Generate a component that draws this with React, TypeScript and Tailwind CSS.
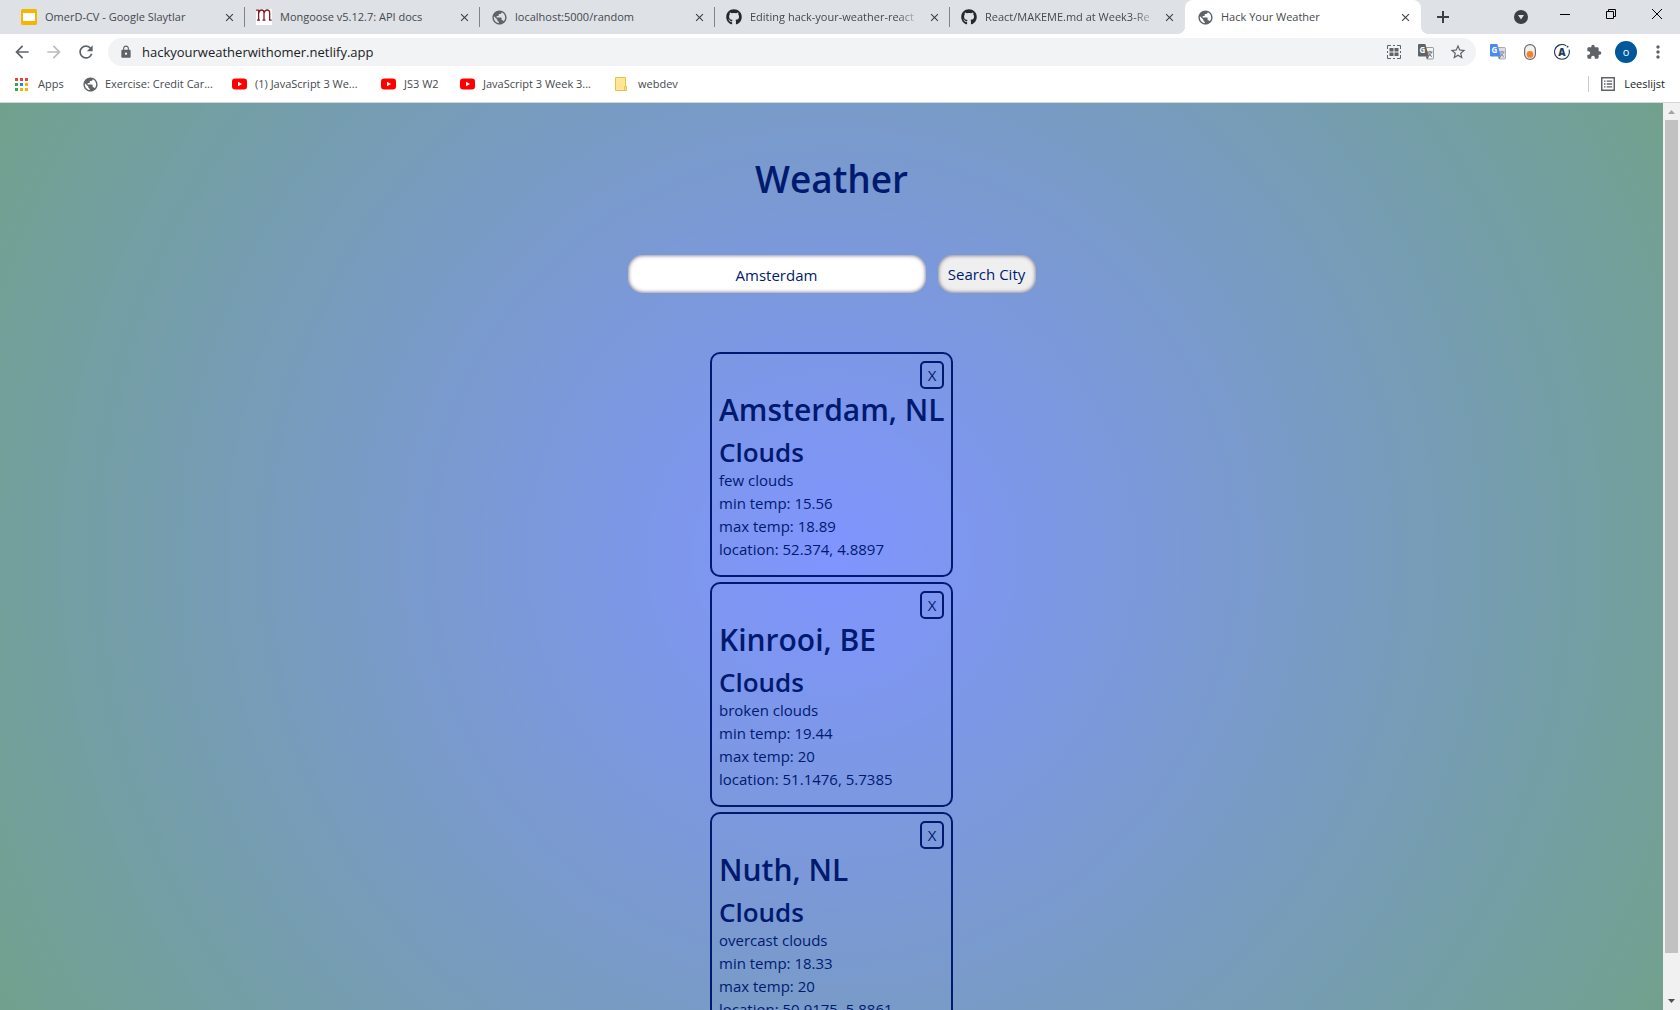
import React from "react";
import {
  MdArrowBack,
  MdArrowForward,
  MdClose,
  MdExtension,
  MdLock,
  MdMoreVert,
  MdPublic,
  MdRefresh,
  MdStarBorder,
} from "react-icons/md";
import { FaGithub } from "react-icons/fa";

function SlidesIcon() {
  return (
    <svg viewBox="0 0 16 16" className="size-4" aria-hidden="true">
      <rect width="16" height="16" rx="1.5" fill="#f7b500" />
      <rect x="2" y="4" width="12" height="8" fill="#fff" />
    </svg>
  );
}

function MongooseIcon() {
  return (
    <svg viewBox="0 0 16 16" className="size-4 bg-white" aria-hidden="true">
      <path
        d="M0 1.2h2.6v10M2.6 4.5C3 2 4.4 1 5.6 1 7.5 1 8 2.4 8 4v7.2M8 4.5C8.4 2 9.8 1 11.2 1c1.9 0 2.5 1.4 2.5 3v7.2h2M1 11.2h3M6.5 11.2h3"
        fill="none"
        stroke="#8a1a1e"
        strokeWidth="1.3"
      />
    </svg>
  );
}

function YoutubeIcon() {
  return (
    <svg viewBox="0 0 15 12" className="h-3 w-[15px] shrink-0" aria-hidden="true">
      <rect y="0.5" width="15" height="11" rx="3" fill="#f00" />
      <path d="M6 3.7v4.6L10 6z" fill="#fff" />
    </svg>
  );
}

function AppsIcon() {
  const colors = ["#ea4335", "#ea4335", "#ea4335", "#34a853", "#1a88f0", "#f5b400", "#34a853", "#f5b400", "#f5b400"];
  return (
    <svg viewBox="0 0 13 13" className="size-[13px] shrink-0" aria-hidden="true">
      {colors.map((c, i) => (
        <rect key={i} x={(i % 3) * 5} y={Math.floor(i / 3) * 5} width="3" height="3" fill={c} />
      ))}
    </svg>
  );
}

function FolderIcon() {
  return (
    <svg viewBox="0 0 12 14" className="h-[14px] w-3 shrink-0" aria-hidden="true">
      <path d="M.5.5h10v9h1v4H.5z" fill="#ffe694" stroke="#e8c24a" />
      <path d="M9.5 13V9.5h1" fill="none" stroke="#e8c24a" />
    </svg>
  );
}

function QrIcon() {
  return (
    <svg viewBox="0 0 14 14" className="size-[14px]" aria-hidden="true">
      <path
        d="M.5 4V.5H4M10 .5h3.5V4M13.5 10v3.5H10M4 13.500H.5V10M6 .5h2M6 13.5h2M.5 6v2M13.5 6v2"
        fill="none"
        stroke="#5f6368"
      />
      <path d="M2.500 3h4v3.5h-4zM7.5 3h4v3.5h-4zM2.5 7.5h4V11h-4zM7.5 7.5h4V11h-4z" fill="#5f6368" />
    </svg>
  );
}

function TranslateIcon({ front, back, ink }: { front: string; back: string; ink: string }) {
  return (
    <svg viewBox="0 0 16 16" className="size-4" aria-hidden="true">
      <path d="M6 3.5h8.5a1 1 0 0 1 1 1V14a1 1 0 0 1-1 1H9.500z" fill={back} stroke={ink} strokeWidth="0.6" />
      <path
        d="M9.5 8h5M12 6.8V8M13.5 8c-.5 2-1.8 3.5-3.5 4.6M10.6 8.8c.6 1.5 1.8 3 3.4 3.8"
        fill="none"
        stroke={ink}
        strokeWidth="0.9"
      />
      <path d="M1 0h6.300l3.700 12.500H1a1 1 0 0 1-1-1V1a1 1 0 0 1 1-1z" fill={front} />
      <text x="1.600" y="9" fontSize="8" fontWeight="700" fill="#fff">
        G
      </text>
      <path d="M8 12.5h3L9 15.500z" fill={ink} />
    </svg>
  );
}

function CapsuleIcon() {
  return (
    <svg viewBox="0 0 12 16" className="h-4 w-3" aria-hidden="true">
      <rect x="0.6" y="0.6" width="10.8" height="14.8" rx="5.2" fill="#f1f1f1" stroke="#6b6b6b" strokeWidth="1.2" />
      <circle cx="6" cy="10.400" r="3.4" fill="#f5812a" />
    </svg>
  );
}

function ApolloIcon() {
  return (
    <svg viewBox="0 0 16 16" className="size-4" aria-hidden="true">
      <path d="M12.300 1.900A7.4 7.4 0 1 0 15 5.600" fill="none" stroke="#1f3a5f" strokeWidth="1.1" />
      <circle cx="13.600" cy="2.700" r="0.9" fill="#1f3a5f" />
      <text x="8" y="11.600" textAnchor="middle" fontSize="10" fontWeight="800" fill="#1f3a5f">
        A
      </text>
    </svg>
  );
}

function ReadingListIcon() {
  return (
    <svg viewBox="0 0 14 14" className="size-[14px] shrink-0" aria-hidden="true">
      <rect x="0.75" y="0.75" width="12.5" height="12.5" fill="#fff" stroke="#5f6368" strokeWidth="1.5" />
      <path
        d="M3 4.2h1.5M3 7h1.5M3 9.8h1.5M5.7 4.2h5.5M5.7 7h5.5M5.7 9.8h5.5"
        stroke="#5f6368"
        strokeWidth="1.3"
      />
    </svg>
  );
}

const globe = <MdPublic className="size-[17px] text-[#5f6368]" />;
const github = <FaGithub className="size-4 text-[#24292e]" />;

const tabs = [
  { icon: <SlidesIcon />, title: "OmerD-CV - Google Slaytlar" },
  { icon: <MongooseIcon />, title: "Mongoose v5.12.7: API docs" },
  { icon: globe, title: "localhost:5000/random" },
  { icon: github, title: "Editing hack-your-weather-react", fade: true },
  { icon: github, title: "React/MAKEME.md at Week3-Re", fade: true, last: true },
  { icon: globe, title: "Hack Your Weather", active: true },
];

function TabStrip() {
  return (
    <div className="flex h-[34px] bg-[#dee1e6] pl-[10px]">
      {tabs.map((t) => (
        <div
          key={t.title}
          className={
            t.active
              ? "relative flex w-[236px] items-center rounded-t-lg bg-white pr-[9px] pl-3"
              : "relative flex w-[235px] items-center pr-[9px] pl-[11px]"
          }
        >
          <span className="flex w-6 shrink-0">{t.icon}</span>
          <span className="flex-1 text-[11px] whitespace-nowrap text-[#45494d]">
            <span
              className={
                t.fade ? "[mask-image:linear-gradient(to_right,black_90%,rgba(0,0,0,0.3))]" : undefined
              }
            >
              {t.title}
            </span>
          </span>
          <button type="button" aria-label={"Close " + t.title} className="ml-1 shrink-0 text-[#3c4043]">
            <MdClose className="size-[13px]" />
          </button>
          {!t.active && !t.last && <span className="absolute top-[7px] right-0 h-5 w-px bg-[#808387]" />}
          {t.active && (
            <>
              <span className="absolute bottom-0 -left-2 size-2 bg-[radial-gradient(circle_at_0_0,#dee1e6_8px,white_8px)]" />
              <span className="absolute -right-2 bottom-0 size-2 bg-[radial-gradient(circle_at_100%_0,#dee1e6_8px,white_8px)]" />
            </>
          )}
        </div>
      ))}
      <button type="button" aria-label="New tab" className="ml-[15px] flex items-center">
        <svg viewBox="0 0 14 14" className="size-[14px]">
          <path d="M7 1v12M1 7h12" stroke="#3c4043" strokeWidth="2" />
        </svg>
      </button>
      <div className="ml-auto flex">
        <button type="button" aria-label="Search tabs" className="flex w-[42px] items-center justify-center">
          <svg viewBox="0 0 14 14" className="size-[14px]">
            <circle cx="7" cy="7" r="7" fill="#3c4043" />
            <path d="M4 5h6L7 9.5z" fill="#dee1e6" />
          </svg>
        </button>
        <button type="button" aria-label="Minimize" className="flex h-7 w-[46px] items-center justify-center">
          <svg viewBox="0 0 10 10" className="size-[10px]">
            <path d="M0 5.5h10" stroke="#000" />
          </svg>
        </button>
        <button type="button" aria-label="Restore" className="flex h-7 w-[46px] items-center justify-center">
          <svg viewBox="0 0 10 10" className="size-[10px]">
            <path d="M.5 2.5h7v7h-7zM2.5 2.5v-2h7v7h-2" fill="none" stroke="#000" />
          </svg>
        </button>
        <button type="button" aria-label="Close window" className="flex h-7 w-[46px] items-center justify-center">
          <svg viewBox="0 0 10 10" className="size-[10px]">
            <path d="M0 0l10 10M10 0L0 10" stroke="#000" />
          </svg>
        </button>
      </div>
    </div>
  );
}

function Toolbar() {
  return (
    <div className="flex h-8 items-center pt-1 pr-[6px] pl-[6px]">
      <button type="button" aria-label="Back" className="flex w-8 justify-center text-[#5f6368]">
        <MdArrowBack className="size-5" />
      </button>
      <button type="button" aria-label="Forward" className="flex w-8 justify-center text-[#babcbe]">
        <MdArrowForward className="size-5" />
      </button>
      <button type="button" aria-label="Reload" className="flex w-8 justify-center text-[#5f6368]">
        <MdRefresh className="size-5" />
      </button>
      <div className="ml-[6px] flex h-7 flex-1 items-center rounded-full bg-[#f1f3f4] pr-[2px] pl-[11px]">
        <MdLock className="size-[14px] text-[#5f6368]" />
        <input
          aria-label="Address"
          defaultValue="hackyourweatherwithomer.netlify.app"
          className="ml-[9px] flex-1 bg-transparent pt-px text-[13px] text-[#202124] outline-none"
        />
        <button type="button" aria-label="QR code" className="flex w-8 justify-center">
          <QrIcon />
        </button>
        <button type="button" aria-label="Translate page" className="flex w-8 justify-center">
          <TranslateIcon front="#5f6368" back="#f1f3f4" ink="#5f6368" />
        </button>
        <button type="button" aria-label="Bookmark" className="flex w-8 justify-center text-[#5f6368]">
          <MdStarBorder className="size-[18px]" />
        </button>
      </div>
      <button type="button" aria-label="Google Translate" className="ml-[6px] flex w-8 justify-center">
        <TranslateIcon front="#4a8af4" back="#dedede" ink="#7a8797" />
      </button>
      <button type="button" aria-label="Capsule" className="flex w-8 justify-center">
        <CapsuleIcon />
      </button>
      <button type="button" aria-label="Apollo" className="flex w-8 justify-center">
        <ApolloIcon />
      </button>
      <button type="button" aria-label="Extensions" className="flex w-8 justify-center text-[#5f6368]">
        <MdExtension className="size-4" />
      </button>
      <button type="button" aria-label="Profile" className="flex w-8 justify-center">
        <span className="flex size-[22px] items-center justify-center rounded-full bg-[#01579b] text-[11px] text-white">
          o
        </span>
      </button>
      <button type="button" aria-label="Menu" className="flex w-8 justify-center text-[#5f6368]">
        <MdMoreVert className="size-5" />
      </button>
    </div>
  );
}

const bookmarks = [
  { icon: <AppsIcon />, label: "Apps", width: "w-[67px]" },
  {
    icon: <MdPublic className="size-[17px] shrink-0 text-[#5f6368]" />,
    label: "Exercise: Credit Car...",
    width: "w-[150px]",
  },
  { icon: <YoutubeIcon />, label: "(1) JavaScript 3 We...", width: "w-[149px]" },
  { icon: <YoutubeIcon />, label: "JS3 W2", width: "w-[79px]" },
  { icon: <YoutubeIcon />, label: "JavaScript 3 Week 3...", width: "w-[155px]" },
  { icon: <FolderIcon />, label: "webdev", width: "w-20" },
];

function BookmarksBar() {
  return (
    <div className="flex h-[37px] items-center border-b border-[#d3d6da] pr-[15px] pl-[15px] text-[11px] text-[#45494d]">
      {bookmarks.map((b) => (
        <a key={b.label} href="#" className={"flex shrink-0 items-center whitespace-nowrap " + b.width}>
          <span className="flex w-[23px] shrink-0">{b.icon}</span>
          {b.label}
        </a>
      ))}
      <a href="#" className="ml-auto flex items-center text-[#202124]">
        <span className="mr-3 h-4 w-px bg-[#c8cacd]" />
        <ReadingListIcon />
        <span className="ml-[9px]">Leeslijst</span>
      </a>
    </div>
  );
}

const cities = [
  { name: "Amsterdam, NL", main: "Clouds", detail: "few clouds", min: "15.56", max: "18.89", location: "52.374, 4.8897" },
  { name: "Kinrooi, BE", main: "Clouds", detail: "broken clouds", min: "19.44", max: "20", location: "51.1476, 5.7385" },
  { name: "Nuth, NL", main: "Clouds", detail: "overcast clouds", min: "18.33", max: "20", location: "50.9175, 5.8861" },
];

function CityCard({ city }: { city: (typeof cities)[number] }) {
  return (
    <article className="flex w-[243px] flex-col rounded-[10px] border-2 border-[#001a70] px-[7px] pt-[7px] pb-[14px]">
      <button
        type="button"
        aria-label={"Remove " + city.name}
        className="h-7 w-6 self-end rounded-[5px] border-2 border-[#001a70] text-[15px] leading-6"
      >
        X
      </button>
      <h2 className="mt-[2px] mb-[7px] text-[30px] leading-[38px] font-semibold whitespace-nowrap">{city.name}</h2>
      <h3 className="text-[26px] leading-[33px] font-semibold">{city.main}</h3>
      <p>{city.detail}</p>
      <p>min temp: {city.min}</p>
      <p>max temp: {city.max}</p>
      <p>location: {city.location}</p>
    </article>
  );
}

function WeatherPage() {
  return (
    <main className="flex flex-1 flex-col items-center overflow-hidden bg-[radial-gradient(circle,#8095ff,#71a18d)] text-[15px] leading-[23px] text-[#001a70]">
      <h1 className="mt-[52px] text-[37px] leading-[48px] font-semibold">Weather</h1>
      <form className="mt-[52px] flex gap-3" onSubmit={(e) => e.preventDefault()}>
        <input
          aria-label="City"
          defaultValue="Amsterdam"
          className="h-[38px] w-[298px] rounded-[15px] bg-white pt-[2px] text-center shadow-[inset_0_0_4px_#5c5470] outline-none"
        />
        <button type="submit" className="h-[38px] w-[98px] rounded-[15px] bg-[#efefef] shadow-[inset_0_0_4px_#5c5470]">
          Search City
        </button>
      </form>
      <div className="mt-[59px] flex flex-col gap-[5px]">
        {cities.map((c) => (
          <CityCard key={c.name} city={c} />
        ))}
      </div>
    </main>
  );
}

function ScrollBar() {
  return (
    <div className="flex w-[17px] shrink-0 flex-col items-center bg-[#f1f1f1]" aria-hidden="true">
      <svg viewBox="0 0 17 17" className="size-[17px]">
        <path d="M5 11l3.5-4 3.5 4z" fill="#a3a3a3" />
      </svg>
      <div className="w-[13px] flex-[833] bg-[#c1c1c1]" />
      <div className="flex-[40]" />
      <svg viewBox="0 0 17 17" className="size-[17px]">
        <path d="M5 6l3.5 4L12 6z" fill="#505050" />
      </svg>
    </div>
  );
}

export default function App() {
  return (
    <div className="flex h-screen flex-col overflow-hidden bg-white font-['Open_Sans',sans-serif]">
      <header className="shrink-0">
        <TabStrip />
        <Toolbar />
        <BookmarksBar />
      </header>
      <div className="flex min-h-0 flex-1">
        <WeatherPage />
        <ScrollBar />
      </div>
    </div>
  );
}
